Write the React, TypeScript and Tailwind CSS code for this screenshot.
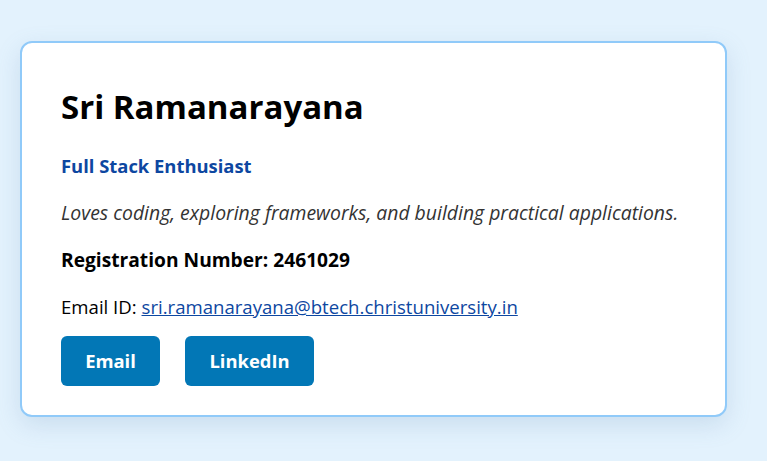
export default function App() {
    return (
        <div
            className="min-h-screen bg-[#e3f2fd] pt-[41px] pl-[20px]"
            style={{ fontFamily: '"Open Sans", "Noto Sans", sans-serif' }}
        >
            <div className="w-[707px] rounded-xl border-2 border-[#90caf9] bg-white px-[39px] pt-[40px] pb-[29px] shadow-[0_8px_24px_rgba(100,140,180,0.2)]">
                <h1 className="text-[33px] leading-[48px] font-bold text-black">
                    Sri Ramanarayana
                </h1>
                <p className="mt-[23px] text-[18.4px] leading-[24px] font-bold text-[#0d47a1]">
                    Full Stack Enthusiast
                </p>
                <p className="mt-[23px] text-[19.4px] leading-[24px] text-[#333] italic">
                    Loves coding, exploring frameworks, and building practical applications.
                </p>
                <p className="mt-[23px] text-[19.2px] leading-[24px] font-bold text-black">
                    Registration Number: 2461029
                </p>
                <p className="mt-[23px] text-[18.6px] leading-[24px] text-black">
                    Email ID:{" "}
                    <a href="#" className="text-[#0d47a1] underline">
                        sri.ramanarayana@btech.christuniversity.in
                    </a>
                </p>
                <div className="mt-[17px] flex gap-[25px]">
                    <a
                        href="#"
                        className="flex h-[50px] w-[99px] items-center justify-center rounded-md bg-[#0277b6] text-[18.4px] font-bold text-white"
                    >
                        Email
                    </a>
                    <a
                        href="#"
                        className="flex h-[50px] w-[129px] items-center justify-center rounded-md bg-[#0277b6] text-[18.4px] font-bold text-white"
                    >
                        LinkedIn
                    </a>
                </div>
            </div>
        </div>
    );
}
